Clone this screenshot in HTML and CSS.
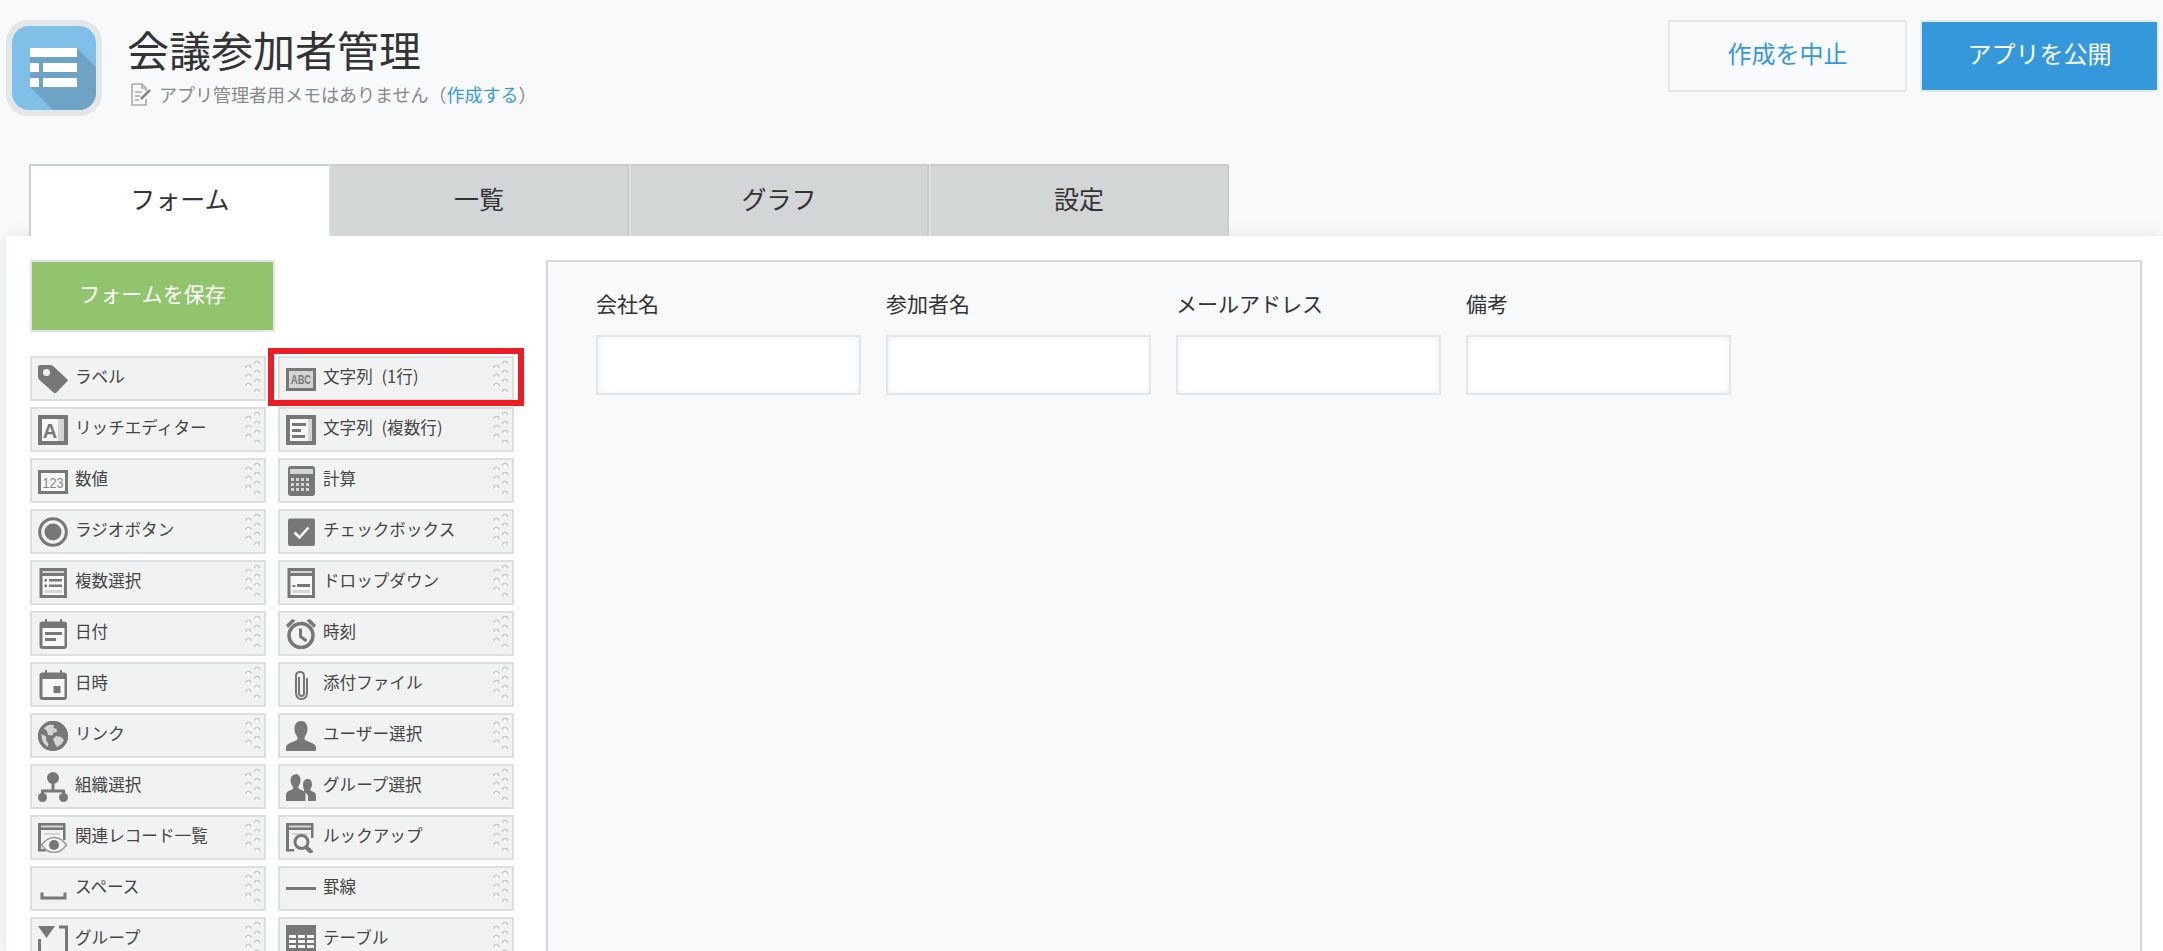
FILE: index.html
```html
<!DOCTYPE html>
<html lang="ja">
<head>
<meta charset="utf-8">
<title>会議参加者管理</title>
<link rel="stylesheet" href="styles.css">
</head>
<body>
<svg class="sprite" width="0" height="0" aria-hidden="true">
  <defs>
    <symbol id="grip" viewBox="0 0 20 37">
      <g class="grip-dot">
        <circle cx="14" cy="4" r="2.600"/><circle cx="14" cy="13" r="2.600"/><circle cx="14" cy="22" r="2.600"/><circle cx="14" cy="32" r="2.600"/>
        <circle cx="5.500" cy="8" r="2.600"/><circle cx="5.500" cy="17" r="2.600"/><circle cx="5.500" cy="26" r="2.600"/>
      </g>
      <g class="grip-arc">
        <path d="M11.400 4a2.600 2.600 0 0 1 5.200 0"/><path d="M11.400 13a2.600 2.600 0 0 1 5.200 0"/><path d="M11.400 22a2.600 2.600 0 0 1 5.200 0"/><path d="M11.400 32a2.600 2.600 0 0 1 5.200 0"/>
        <path d="M2.900 8a2.600 2.600 0 0 1 5.200 0"/><path d="M2.900 17a2.600 2.600 0 0 1 5.200 0"/><path d="M2.900 26a2.600 2.600 0 0 1 5.200 0"/>
      </g>
    </symbol>
    <symbol id="i-tag" viewBox="0 0 30 30">
      <path class="f" fill-rule="evenodd" d="M2 1h10q2 0 3 1l14 13q1.500 1 0 2.500L18.500 28.500q-1.500 1.500-3 0L1.500 16Q0 14.500 0 13V3q0-2 2-2zM8.500 5a3.500 3.500 0 1 0 0 7 3.500 3.500 0 0 0 0-7z"/>
    </symbol>
    <symbol id="i-rich" viewBox="0 0 30 30">
      <rect class="f" width="30" height="30"/><rect class="l" x="4" y="4" width="22" height="22"/><rect class="m" x="20" y="4" width="6" height="22"/>
      <text class="ic-text ic-a" x="12" y="22.500">A</text>
    </symbol>
    <symbol id="i-abc" viewBox="0 0 30 30">
      <rect class="f" y="4" width="30" height="23"/><rect class="m" x="3" y="7" width="24" height="17"/>
      <text class="ic-text ic-abc" x="15" y="20" textLength="20" lengthAdjust="spacingAndGlyphs">ABC</text>
    </symbol>
    <symbol id="i-multi" viewBox="0 0 30 30">
      <rect class="f" width="30" height="30"/><rect class="l" x="4" y="4" width="22" height="22"/><rect class="m" x="22" y="4" width="4" height="22"/>
      <rect class="f" x="6" y="8" width="14" height="3"/><rect class="f" x="6" y="14" width="9" height="3"/><rect class="f" x="6" y="20" width="13" height="3"/>
    </symbol>
    <symbol id="i-num" viewBox="0 0 30 30">
      <rect class="f" y="4" width="30" height="24"/><rect class="l" x="3" y="7" width="24" height="18"/>
      <text class="ic-text ic-num" x="15" y="21.500" textLength="21" lengthAdjust="spacingAndGlyphs">123</text>
    </symbol>
    <symbol id="i-calc" viewBox="0 0 30 30">
      <rect class="f" x="2" y="0" width="27" height="30" rx="3"/><rect class="m" x="4" y="3" width="23" height="5"/>
      <g class="m"><rect x="5" y="12" width="3" height="3"/><rect x="10" y="12" width="3" height="3"/><rect x="15" y="12" width="3" height="3"/><rect x="20" y="12" width="3" height="3"/><rect x="5" y="17" width="3" height="3"/><rect x="10" y="17" width="3" height="3"/><rect x="15" y="17" width="3" height="3"/><rect x="20" y="17" width="3" height="3"/><rect x="5" y="22" width="3" height="3"/><rect x="10" y="22" width="3" height="3"/><rect x="15" y="22" width="3" height="3"/><rect x="20" y="22" width="3" height="3"/></g>
    </symbol>
    <symbol id="i-radio" viewBox="0 0 30 30">
      <circle class="s" cx="15" cy="15" r="13.300" stroke-width="3"/><circle class="f" cx="15" cy="15" r="8.500"/>
    </symbol>
    <symbol id="i-check" viewBox="0 0 30 30">
      <rect class="f" x="2" y="1.500" width="27" height="27.500" rx="2"/><path class="wl" d="M8.500 15.500l5 5 9-10"/>
    </symbol>
    <symbol id="i-msel" viewBox="0 0 30 30">
      <rect class="f" x="1.500" width="27.500" height="30"/><rect class="l" x="4.500" y="8" width="21.500" height="19"/>
      <rect class="m" x="4.500" y="3" width="21.500" height="2"/>
      <rect class="m" x="6.500" y="22" width="17.500" height="3"/>
      <rect class="f" x="11" y="11" width="13" height="2.500"/><rect class="f" x="11" y="16.500" width="13" height="2.500"/>
      <rect class="f" x="6.500" y="11" width="2.500" height="2.500"/><rect class="f" x="6.500" y="16.500" width="2.500" height="2.500"/>
    </symbol>
    <symbol id="i-drop" viewBox="0 0 30 30">
      <rect class="f" x="1.500" width="27.500" height="30"/><rect class="l" x="4.500" y="8" width="21.500" height="19"/>
      <rect class="m" x="4.500" y="3" width="21.500" height="2"/>
      <rect class="m" x="6.500" y="22" width="17.500" height="3"/>
      <rect class="f" x="11" y="16" width="13" height="3"/><rect class="f" x="6.500" y="17" width="3" height="2"/>
    </symbol>
    <symbol id="i-date" viewBox="0 0 30 30">
      <path class="f" d="M7 0h2v2.500h13V0h2v2.500h2q3 0 3 3V27q0 3-3 3H4.500q-3 0-3-3V5.500q0-3 3-3H7z"/>
      <rect class="l" x="4.500" y="9" width="22" height="18"/><rect class="f" x="7" y="13" width="17" height="3"/><rect class="f" x="7" y="19" width="11" height="3"/>
    </symbol>
    <symbol id="i-time" viewBox="0 0 30 30">
      <circle class="s" cx="15" cy="16.500" r="12" stroke-width="3.500"/>
      <path class="dl" d="M14.500 9.500v8l6 4.500"/>
      <path class="f" d="M0 6L6 0 9.500 1.500 2 9zM30 6l-6-6-3.500 1.500L28 9z"/>
    </symbol>
    <symbol id="i-dtime" viewBox="0 0 30 30">
      <path class="f" d="M7 0h2v2.500h13V0h2v2.500h2q3 0 3 3V27q0 3-3 3H4.500q-3 0-3-3V5.500q0-3 3-3H7z"/>
      <rect class="l" x="4.500" y="9" width="22" height="18"/><rect class="f" x="15.500" y="16" width="7" height="7"/>
    </symbol>
    <symbol id="i-clip" viewBox="0 0 30 30">
      <path class="clip" d="M13 7v16q0 3 2.500 3T18 23V6q0-4-4-4t-4 4v16q0 7 5.500 7T21 22V8"/>
    </symbol>
    <symbol id="i-link" viewBox="0 0 30 30">
      <circle class="f" cx="15" cy="15" r="15"/>
      <path class="m" d="M11 3.500q-3 1-5.500 3.500L9 10l1 4 4 .5 2-3 3-.5-.5-3-3-1 .5-3zM18 15l-3 3 2 5 2 3q5-2 7-7l-3-3z"/>
      <path class="m" d="M3.500 13q-.5 5 2 9l4 4.500 1-3.500-2.500-4 .5-3-3-2z"/>
      <circle class="s" cx="15" cy="15" r="13.500" stroke-width="3"/>
    </symbol>
    <symbol id="i-user" viewBox="0 0 30 30">
      <path class="f" d="M15 0c4 0 6.500 3 6.500 7.500 0 3-1 6-2.500 8-1 1.500-.5 3 1 4 3 1.500 9.500 3 10 6.500v4H0v-4c.5-3.500 7-5 10-6.500 1.500-1 2-2.500 1-4-1.500-2-2.500-5-2.500-8C8.500 3 11 0 15 0z"/>
    </symbol>
    <symbol id="i-org" viewBox="0 0 30 30">
      <circle class="f" cx="15" cy="6" r="6"/><circle class="f" cx="4.500" cy="25.500" r="4.500"/><circle class="f" cx="25.500" cy="25.500" r="4.500"/>
      <path class="dl" d="M15 10v9M4.500 23v-4h21v4"/>
    </symbol>
    <symbol id="i-group" viewBox="0 0 30 30">
      <path class="f" d="M9.500 2c3 0 5 2.500 5 6 0 2.500-1 5-2 6.500-.5 1 0 2 1 2.500 2 1 5.500 2 6 5v7H0v-6.500c.5-3 4-4 6-5 1-.5 1.500-1.500 1-2.500-1-1.500-2.500-4-2.500-6.500 0-3.500 2-6 5-6z"/>
      <path class="f" d="M22 7c2.500 0 4 2 4 5 0 2-.5 3.500-1.500 5-.5 1 0 1.500 1 2 1.500.5 4 1.500 4.500 4v6h-8v-5c-.5-2-3-3.500-4.500-4.500 1-1 .5-2 0-3-.5-1.500-.5-3-.5-4.500 0-3 2-5 5-5z"/>
    </symbol>
    <symbol id="i-rel" viewBox="0 0 30 30">
      <path class="f" d="M0 0h27.500v17h-2.500V7H3v19h5v2.500H0z"/>
      <rect class="m" x="3" y="2.500" width="22" height="2"/><rect class="m" x="6" y="10" width="16" height="2"/>
      <path class="eye" d="M3.500 22q5.500-7.500 12.500-7.500T28.500 22q-5.500 7.500-12.500 7.500T3.500 22z"/>
      <circle class="f" cx="16" cy="22" r="5"/>
    </symbol>
    <symbol id="i-look" viewBox="0 0 30 30">
      <path class="f" d="M0 0h27.500v15h-2.500V7H3v19h5v2.500H0z"/>
      <rect class="m" x="3" y="2.500" width="22" height="2"/><rect class="m" x="6" y="10" width="16" height="2"/>
      <circle class="look" cx="15.500" cy="19" r="6.500"/><path class="lookh" d="M20 24l6 6"/>
    </symbol>
    <symbol id="i-space" viewBox="0 0 30 30">
      <path class="bar" d="M4 18.500V24h23v-5.500"/>
    </symbol>
    <symbol id="i-line" viewBox="0 0 30 30">
      <rect class="f" y="13" width="30" height="3"/>
    </symbol>
    <symbol id="i-box" viewBox="0 0 30 30">
      <path class="f" d="M0 1h17L8.500 13z"/><path class="bar" d="M21 2h7.500v27M1.500 14v15"/>
    </symbol>
    <symbol id="i-table" viewBox="0 0 30 30">
      <rect class="f" y="0" width="30" height="30"/>
      <g class="l"><rect x="3" y="10" width="7" height="3"/><rect x="12" y="10" width="7" height="3"/><rect x="21" y="10" width="7" height="3"/><rect x="3" y="15" width="7" height="3"/><rect x="12" y="15" width="7" height="3"/><rect x="21" y="15" width="7" height="3"/><rect x="3" y="20" width="7" height="3"/><rect x="12" y="20" width="7" height="3"/><rect x="21" y="20" width="7" height="3"/></g>
    </symbol>
  </defs>
</svg>

<div class="page">
  <header class="header">
    <svg class="app-icon" viewBox="0 0 96 96" aria-hidden="true">
      <defs><clipPath id="app-clip"><rect x="6" y="6" width="84" height="84" rx="17"/></clipPath></defs>
      <rect class="app-ring" width="96" height="96" rx="22"/>
      <rect class="app-bg" x="6" y="6" width="84" height="84" rx="17"/>
      <polygon class="app-shadow" clip-path="url(#app-clip)" points="24,28 71,28 90,47 90,90 47,90 24,67"/>
      <g class="app-bars">
        <rect x="24" y="28" width="47" height="9"/>
        <rect x="24" y="43" width="9" height="9"/><rect x="37" y="43" width="34" height="9"/>
        <rect x="24" y="58" width="9" height="9"/><rect x="37" y="58" width="34" height="9"/>
      </g>
    </svg>
    <div class="title-block">
      <h1 class="title">会議参加者管理</h1>
      <p class="memo">
        <svg class="memo-icon" viewBox="0 0 21 23" aria-hidden="true">
          <path class="memo-doc" d="M1 1h10l4 4v3M15 16v6H1V1"/><path class="memo-doc" d="M11 1v4h4M4 9h7M4 13h5M4 17h4"/>
          <path class="memo-pen" d="M10 16l9-9"/>
        </svg>
        <span>アプリ管理者用メモはありません（<a class="link" href="#">作成する</a>）</span>
      </p>
    </div>
    <div class="actions">
      <button class="btn btn-cancel" type="button">作成を中止</button>
      <button class="btn btn-publish" type="button">アプリを公開</button>
    </div>
  </header>

  <nav class="tabs">
    <a class="tab tab-active" href="#">フォーム</a>
    <a class="tab" href="#">一覧</a>
    <a class="tab" href="#">グラフ</a>
    <a class="tab" href="#">設定</a>
  </nav>

  <main class="main">
    <aside class="sidebar">
      <button class="btn-save" type="button">フォームを保存</button>
      <ul class="palette">
        <li class="item"><svg class="ic"><use href="#i-tag"/></svg><span class="item-label">ラベル</span><svg class="grip"><use href="#grip"/></svg></li>
        <li class="item"><svg class="ic"><use href="#i-abc"/></svg><span class="item-label">文字列 (1行)</span><svg class="grip"><use href="#grip"/></svg><span class="highlight"></span></li>
        <li class="item"><svg class="ic"><use href="#i-rich"/></svg><span class="item-label">リッチエディター</span><svg class="grip"><use href="#grip"/></svg></li>
        <li class="item"><svg class="ic"><use href="#i-multi"/></svg><span class="item-label">文字列 (複数行)</span><svg class="grip"><use href="#grip"/></svg></li>
        <li class="item"><svg class="ic"><use href="#i-num"/></svg><span class="item-label">数値</span><svg class="grip"><use href="#grip"/></svg></li>
        <li class="item"><svg class="ic"><use href="#i-calc"/></svg><span class="item-label">計算</span><svg class="grip"><use href="#grip"/></svg></li>
        <li class="item"><svg class="ic"><use href="#i-radio"/></svg><span class="item-label">ラジオボタン</span><svg class="grip"><use href="#grip"/></svg></li>
        <li class="item"><svg class="ic"><use href="#i-check"/></svg><span class="item-label">チェックボックス</span><svg class="grip"><use href="#grip"/></svg></li>
        <li class="item"><svg class="ic"><use href="#i-msel"/></svg><span class="item-label">複数選択</span><svg class="grip"><use href="#grip"/></svg></li>
        <li class="item"><svg class="ic"><use href="#i-drop"/></svg><span class="item-label">ドロップダウン</span><svg class="grip"><use href="#grip"/></svg></li>
        <li class="item"><svg class="ic"><use href="#i-date"/></svg><span class="item-label">日付</span><svg class="grip"><use href="#grip"/></svg></li>
        <li class="item"><svg class="ic"><use href="#i-time"/></svg><span class="item-label">時刻</span><svg class="grip"><use href="#grip"/></svg></li>
        <li class="item"><svg class="ic"><use href="#i-dtime"/></svg><span class="item-label">日時</span><svg class="grip"><use href="#grip"/></svg></li>
        <li class="item"><svg class="ic"><use href="#i-clip"/></svg><span class="item-label">添付ファイル</span><svg class="grip"><use href="#grip"/></svg></li>
        <li class="item"><svg class="ic"><use href="#i-link"/></svg><span class="item-label">リンク</span><svg class="grip"><use href="#grip"/></svg></li>
        <li class="item"><svg class="ic"><use href="#i-user"/></svg><span class="item-label">ユーザー選択</span><svg class="grip"><use href="#grip"/></svg></li>
        <li class="item"><svg class="ic"><use href="#i-org"/></svg><span class="item-label">組織選択</span><svg class="grip"><use href="#grip"/></svg></li>
        <li class="item"><svg class="ic"><use href="#i-group"/></svg><span class="item-label">グループ選択</span><svg class="grip"><use href="#grip"/></svg></li>
        <li class="item"><svg class="ic"><use href="#i-rel"/></svg><span class="item-label">関連レコード一覧</span><svg class="grip"><use href="#grip"/></svg></li>
        <li class="item"><svg class="ic"><use href="#i-look"/></svg><span class="item-label">ルックアップ</span><svg class="grip"><use href="#grip"/></svg></li>
        <li class="item"><svg class="ic"><use href="#i-space"/></svg><span class="item-label">スペース</span><svg class="grip"><use href="#grip"/></svg></li>
        <li class="item"><svg class="ic"><use href="#i-line"/></svg><span class="item-label">罫線</span><svg class="grip"><use href="#grip"/></svg></li>
        <li class="item"><svg class="ic"><use href="#i-box"/></svg><span class="item-label">グループ</span><svg class="grip"><use href="#grip"/></svg></li>
        <li class="item"><svg class="ic"><use href="#i-table"/></svg><span class="item-label">テーブル</span><svg class="grip"><use href="#grip"/></svg></li>
      </ul>
    </aside>
    <section class="canvas">
      <div class="field"><label class="field-label">会社名</label><input class="field-input" type="text"></div>
      <div class="field"><label class="field-label">参加者名</label><input class="field-input" type="text"></div>
      <div class="field"><label class="field-label">メールアドレス</label><input class="field-input" type="text"></div>
      <div class="field"><label class="field-label">備考</label><input class="field-input" type="text"></div>
    </section>
  </main>
</div>
</body>
</html>
```

FILE: styles.css
```css
* { box-sizing: border-box; }
html, body { margin: 0; height: 100%; overflow: hidden; }
body {
  background: #f8f9fb;
  color: #333;
  font-family: "Noto Sans CJK JP", "Noto Sans", sans-serif;
}
.sprite { position: absolute; }
.page { height: 951px; overflow: hidden; display: flex; flex-direction: column; }

/* header */
.header { height: 164px; flex: none; display: flex; align-items: flex-start; padding: 20px 4px 0 6px; }
.app-icon { width: 96px; height: 96px; flex: none; }
.app-ring { fill: #e4e7e8; }
.app-bg { fill: #80bfe7; }
.app-shadow { fill: #6fa3c6; }
.app-bars { fill: #fff; }
.title-block { margin-left: 25px; flex: 1; }
.title { margin: 3px 0 0; font-size: 42px; line-height: 52px; font-weight: 400; color: #333; }
.memo { margin: 6px 0 0 4px; display: flex; align-items: center; gap: 7px; font-size: 18px; line-height: 26px; color: #888; }
.memo-icon { width: 21px; height: 23px; flex: none; }
.memo-doc { fill: none; stroke: #aaa; stroke-width: 1.6; }
.memo-pen { fill: none; stroke: #888; stroke-width: 2.5; }
.link { color: #3498db; text-decoration: none; }
.actions { display: flex; gap: 13px; }
.btn { width: 239px; height: 72px; border: 2px solid #e6e9ea; font: inherit; font-size: 24px; padding: 0 0 7px; }
.btn-cancel { background: #f9fafc; color: #3498db; }
.btn-publish { background: #3498db; color: #fff; }

/* tabs */
.tabs { flex: none; display: flex; height: 72px; padding-left: 29px; position: relative; z-index: 1; }
.tab {
  width: 300px;
  display: flex;
  align-items: center;
  justify-content: center;
  padding-bottom: 7px;
  background: #d3d6d7;
  border: 2px solid #c9cdce;
  border-bottom: 0;
  border-left-color: #dcdfe0;
  color: #333;
  font-size: 25px;
  text-decoration: none;
}
.tab-active { background: #fff; border-color: #c9cdce; border-right: 0; }

/* main */
.main {
  flex: 1;
  min-height: 0;
  margin-left: 6px;
  display: flex;
  gap: 32px;
  padding: 24px 21px 0 24px;
  background: #fff;
  box-shadow: 0 0 16px rgba(0, 0, 0, 0.09);
}
.sidebar { width: 484px; flex: none; }
.btn-save {
  display: block;
  width: 245px;
  height: 72px;
  background: #91c46d;
  border: 2px solid #e3e7e8;
  color: #fff;
  font: inherit;
  font-size: 21px;
  padding: 0 0 6px;
}
.palette { list-style: none; margin: 24px 0 0; padding: 0; display: grid; grid-template-columns: 236px 236px; column-gap: 12px; row-gap: 6px; }
.item {
  position: relative;
  height: 45px;
  display: flex;
  align-items: center;
  padding: 0 1px 0 6px;
  background: #f1f3f3;
  border: 2px solid #dcdfdf;
  font-size: 16.6px;
  color: #444;
}
.item-label { margin-left: 7px; margin-bottom: 5px; white-space: nowrap; word-spacing: 5px; }
.ic { width: 30px; height: 30px; flex: none; }
.grip { width: 20px; height: 37px; flex: none; margin-left: auto; }
.highlight { position: absolute; top: -10px; left: -12px; right: -12px; bottom: -7px; border: 6px solid #ed1c24; pointer-events: none; }

/* icon paints */
.f { fill: #777; }
.l { fill: #f7f8f8; }
.m { fill: #d4d6d6; }
.s { fill: none; stroke: #777; }
.wl { fill: none; stroke: #fff; stroke-width: 2.5; }
.dl { fill: none; stroke: #777; stroke-width: 3; }
.bar { fill: none; stroke: #777; stroke-width: 3; }
.clip { fill: none; stroke: #777; stroke-width: 2; }
.eye { fill: #f1f3f3; stroke: #999; stroke-width: 1.5; }
.look { fill: #f1f3f3; stroke: #777; stroke-width: 3; }
.lookh { fill: none; stroke: #777; stroke-width: 4; }
.grip-dot { fill: #fafbfb; stroke: #e4e6e6; stroke-width: 0.6; }
.grip-arc { fill: none; stroke: #c4c7c7; stroke-width: 1.2; }
.ic-text { font-family: "Liberation Sans", sans-serif; font-weight: 700; fill: #777; text-anchor: middle; }
.ic-a { font-size: 20px; }
.ic-abc { font-size: 12px; }
.ic-num { font-weight: 400; font-size: 14px; fill: #888; }

/* form canvas */
.canvas {
  flex: 1;
  display: flex;
  align-items: flex-start;
  gap: 25px;
  height: 800px;
  padding: 26px 48px 0;
  background: #f8f9fb;
  border: 2px solid #d3d8d8;
}
.field { width: 265px; }
.field-label { display: block; font-size: 21px; line-height: 30px; margin-bottom: 17px; color: #333; }
.field-input {
  display: block;
  width: 265px;
  height: 60px;
  background: #fff;
  border: 2px solid #e3e7e8;
  box-shadow: inset 0 0 6px rgba(0, 0, 0, 0.07);
  outline: 0;
  padding: 0;
}
```
